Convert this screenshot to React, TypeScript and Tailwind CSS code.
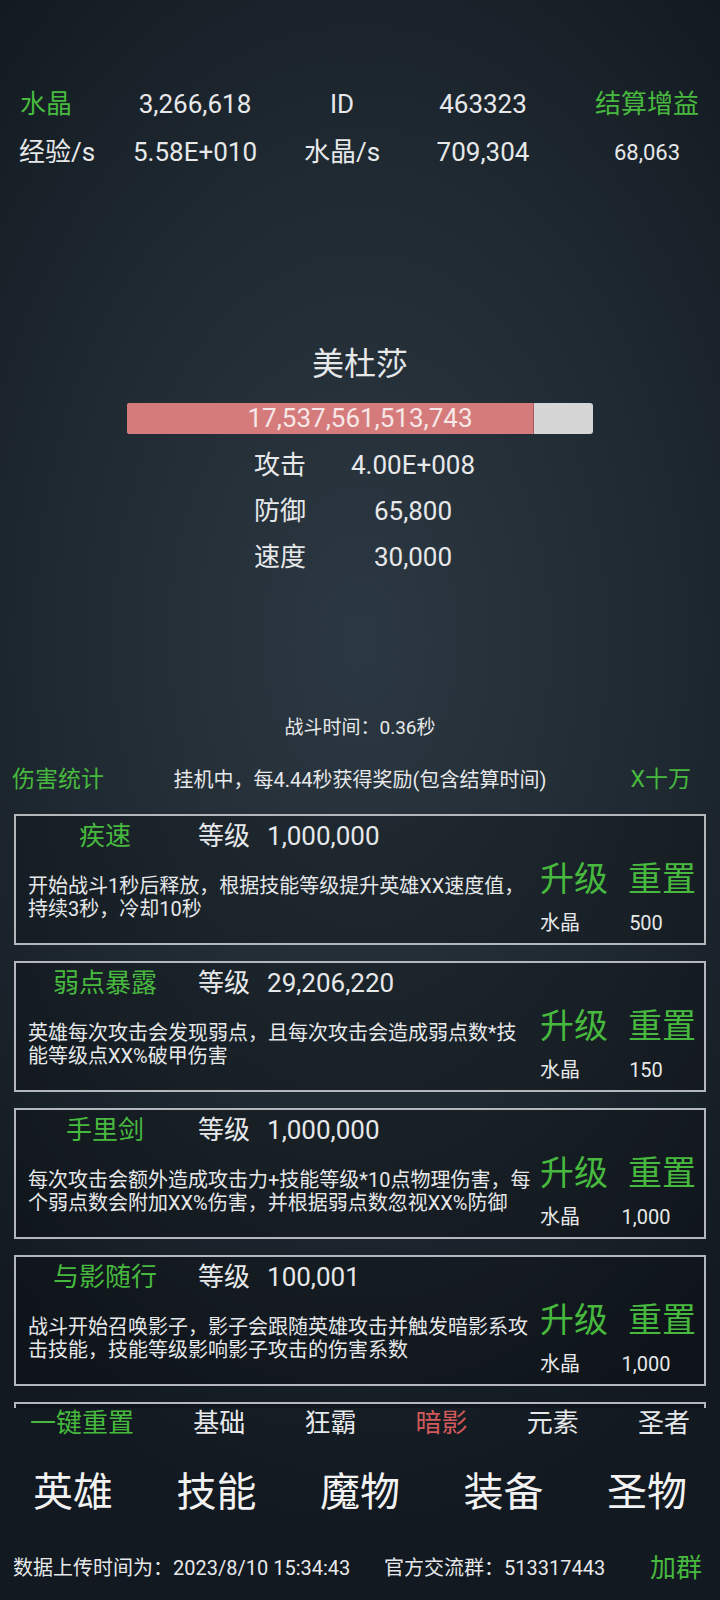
import React from "react";

const G = "text-[#47b93e]";
const W = "text-[#e6e8ea]";

type Skill = {
  name: string;
  level: string;
  lines: string[];
  cost: string;
};

const skills: Skill[] = [
  {
    name: "疾速",
    level: "1,000,000",
    lines: ["开始战斗1秒后释放，根据技能等级提升英雄XX速度值，", "持续3秒，冷却10秒"],
    cost: "500",
  },
  {
    name: "弱点暴露",
    level: "29,206,220",
    lines: ["英雄每次攻击会发现弱点，且每次攻击会造成弱点数*技", "能等级点XX%破甲伤害"],
    cost: "150",
  },
  {
    name: "手里剑",
    level: "1,000,000",
    lines: ["每次攻击会额外造成攻击力+技能等级*10点物理伤害，每", "个弱点数会附加XX%伤害，并根据弱点数忽视XX%防御"],
    cost: "1,000",
  },
  {
    name: "与影随行",
    level: "100,001",
    lines: ["战斗开始召唤影子，影子会跟随英雄攻击并触发暗影系攻", "击技能，技能等级影响影子攻击的伤害系数"],
    cost: "1,000",
  },
];

function SkillCard({ s }: { s: Skill }) {
  return (
    <div className="h-[131px] shrink-0 border-2 border-[#b4b8bc] bg-black/20 flex flex-col">
      <div className="mt-[2px] h-[36px] flex items-center text-[26px]">
        <div className={`w-[178px] text-center ${G}`}>{s.name}</div>
        <div className={`ml-[4px] ${W}`}>等级</div>
        <div className={`ml-[17px] ${W}`}>{s.level}</div>
      </div>
      <div className="flex flex-row items-start">
        <div className={`pl-[12px] pt-[21px] text-[20px] leading-[23px] ${W}`}>
          {s.lines.map((l, i) => (
            <div key={i} className="whitespace-nowrap h-[23px]">
              {l}
            </div>
          ))}
        </div>
        <div className="ml-auto mr-[8px] w-[156px] flex flex-col">
          <div className={`pt-[5px] h-[45px] flex items-center gap-[20px] text-[34px] leading-[40px] ${G}`}>
            <span>升级</span>
            <span>重置</span>
          </div>
          <div className={`mt-[12px] h-[24px] flex items-center text-[20px] ${W}`}>
            <span className="w-[40px]">水晶</span>
            <span className="ml-[28px] w-[76px] text-center">{s.cost}</span>
          </div>
        </div>
      </div>
    </div>
  );
}

export default function App() {
  return (
    <div
      className="w-[720px] h-[1600px] overflow-hidden flex flex-col bg-[radial-gradient(ellipse_78%_55%_at_50%_40%,#2c3842_0%,#1f2931_55%,#121920_100%)]"
      style={{ fontFamily: "Roboto, 'Noto Sans CJK SC', 'Noto Sans', sans-serif" }}
    >
      {/* top stats */}
      <div className="pt-[80px] grid grid-cols-[98px_194px_100px_182px_146px] text-[26px]">
        <div className={`h-[48px] flex items-center pl-[20px] ${G}`}>水晶</div>
        <div className={`h-[48px] flex items-center justify-center ${W}`}>3,266,618</div>
        <div className={`h-[48px] flex items-center justify-center ${W}`}>ID</div>
        <div className={`h-[48px] flex items-center justify-center ${W}`}>463323</div>
        <div className={`h-[48px] flex items-center justify-center whitespace-nowrap ${G}`}>结算增益</div>

        <div className={`h-[48px] flex items-center pl-[19px] whitespace-nowrap ${W}`}>经验/s</div>
        <div className={`h-[48px] flex items-center justify-center ${W}`}>5.58E+010</div>
        <div className={`h-[48px] flex items-center justify-center whitespace-nowrap ${W}`}>水晶/s</div>
        <div className={`h-[48px] flex items-center justify-center ${W}`}>709,304</div>
        <div className={`h-[48px] flex items-center justify-center text-[22px] ${W}`}>68,063</div>
      </div>

      {/* monster */}
      <div className={`mt-[166px] h-[44px] flex items-center justify-center text-[32px] ${W}`}>美杜莎</div>
      <div className="mt-[17px] mx-auto w-[466px] h-[31px] relative rounded-[3px] bg-[#d6d6d6] overflow-hidden">
        <div className="h-full w-[87.3%] bg-[#d57b7b] border-r border-[#a85c5c]" />
        <div className="absolute inset-0 flex items-center justify-center text-[26px] text-[#f6e8e8]">
          17,537,561,513,743
        </div>
      </div>
      <div className="mt-[8px] flex flex-col text-[26px]">
        {[
          ["攻击", "4.00E+008"],
          ["防御", "65,800"],
          ["速度", "30,000"],
        ].map(([k, v]) => (
          <div key={k} className={`h-[46px] flex items-center pl-[254px] ${W}`}>
            <span className="w-[80px]">{k}</span>
            <span className="w-[158px] text-center">{v}</span>
          </div>
        ))}
      </div>

      <div className={`mt-[133px] h-[30px] flex items-center justify-center text-[19px] ${W}`}>
        战斗时间：0.36秒
      </div>

      <div className="mt-[20px] h-[32px] grid grid-cols-[1fr_auto_1fr] items-center">
        <div className={`pl-[12px] text-[23px] ${G}`}>伤害统计</div>
        <div className={`text-[20px] ${W}`}>挂机中，每4.44秒获得奖励(包含结算时间)</div>
        <div className={`justify-self-end pr-[29px] text-[23px] ${G}`}>X十万</div>
      </div>

      {/* skills list */}
      <div className="mt-[19px] h-[594px] overflow-hidden flex flex-col gap-[16px] px-[14px]">
        {skills.map((s, i) => (
          <SkillCard key={i} s={s} />
        ))}
        <div className="h-[131px] shrink-0 border-2 border-[#b4b8bc] bg-black/20" />
      </div>

      {/* category tabs */}
      <div className="h-[30px] flex items-center justify-between px-[30px] text-[26px]">
        <span className={G}>一键重置</span>
        <span className={W}>基础</span>
        <span className={W}>狂霸</span>
        <span className="text-[#d25a5a]">暗影</span>
        <span className={W}>元素</span>
        <span className={W}>圣者</span>
      </div>

      {/* main nav */}
      <div className="mt-[27px] h-[56px] flex items-center justify-between px-[33px] text-[40px] text-[#f2f2f2]">
        <span>英雄</span>
        <span>技能</span>
        <span>魔物</span>
        <span>装备</span>
        <span>圣物</span>
      </div>

      {/* footer */}
      <div className="mt-[27px] h-[40px] flex items-center pl-[13px]">
        <span className={`w-[371px] whitespace-nowrap text-[20px] ${W}`}>数据上传时间为：2023/8/10 15:34:43</span>
        <span className={`whitespace-nowrap text-[20px] ${W}`}>官方交流群：513317443</span>
        <span className={`ml-auto mr-[18px] text-[26px] ${G}`}>加群</span>
      </div>
    </div>
  );
}
